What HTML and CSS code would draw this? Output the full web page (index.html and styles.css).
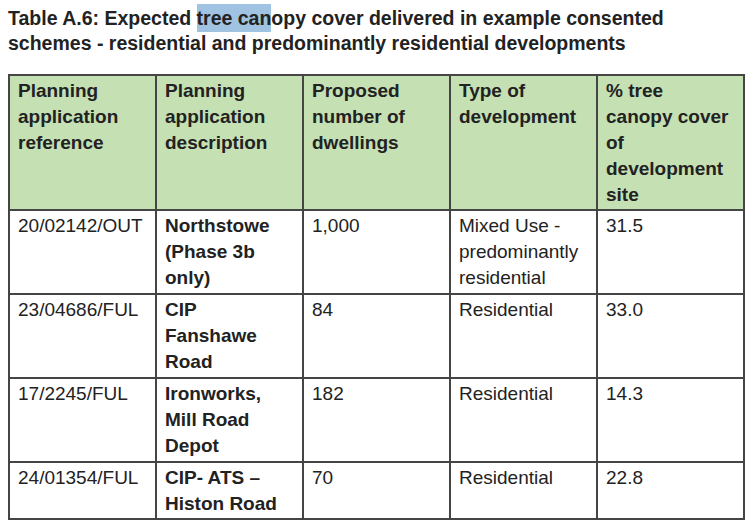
FILE: index.html
```html
<!DOCTYPE html>
<html>
<head>
<meta charset="utf-8">
<link rel="stylesheet" href="styles.css">
</head>
<body>
<div class="page">
  <h1 class="title">Table A.6: Expected <span class="hl">tree can</span>opy cover delivered in example consented schemes - residential and predominantly residential developments</h1>
  <table class="data">
    <colgroup>
      <col class="c"><col class="c"><col class="c"><col class="c"><col class="c">
    </colgroup>
    <thead>
      <tr>
        <th>Planning application reference</th>
        <th>Planning application description</th>
        <th>Proposed number of dwellings</th>
        <th>Type of development</th>
        <th>% tree<br>canopy cover of development site</th>
      </tr>
    </thead>
    <tbody>
      <tr>
        <td>20/02142/OUT</td>
        <td class="b">Northstowe (Phase 3b only)</td>
        <td>1,000</td>
        <td>Mixed Use - predominantly residential</td>
        <td>31.5</td>
      </tr>
      <tr>
        <td>23/04686/FUL</td>
        <td class="b">CIP<br>Fanshawe Road</td>
        <td>84</td>
        <td>Residential</td>
        <td>33.0</td>
      </tr>
      <tr>
        <td>17/2245/FUL</td>
        <td class="b">Ironworks, Mill Road Depot</td>
        <td>182</td>
        <td>Residential</td>
        <td>14.3</td>
      </tr>
      <tr>
        <td>24/01354/FUL</td>
        <td class="b">CIP- ATS – Histon Road</td>
        <td>70</td>
        <td>Residential</td>
        <td>22.8</td>
      </tr>
    </tbody>
  </table>
</div>
</body>
</html>
```

FILE: styles.css
```css
html, body {
  margin: 0;
  padding: 0;
  background: #ffffff;
}
.page {
  padding: 6px 4px 0 8px;
  font-family: "Liberation Sans", Arial, sans-serif;
  color: #222222;
}
.title {
  margin: 0 0 18px 0;
  font-size: 19.5px;
  font-weight: bold;
  line-height: 25px;
  width: 700px;
}
.hl {
  background: #9fc3e0;
  padding: 3px 0;
}
.data {
  border-collapse: collapse;
  width: 737px;
  table-layout: fixed;
  font-size: 19px;
  line-height: 26px;
}
.data .c {
  width: 147px;
}
.data th, .data td {
  border: 2px solid #454545;
  padding: 2px 8px 1px 8px;
  vertical-align: top;
  text-align: left;
}
.data th {
  background: #c5e0b3;
  font-weight: bold;
  height: 130px;
}
.data td.b {
  font-weight: bold;
}
.data tbody tr {
  height: 84px;
}
.data tbody tr:last-child {
  height: 56px;
}
```
